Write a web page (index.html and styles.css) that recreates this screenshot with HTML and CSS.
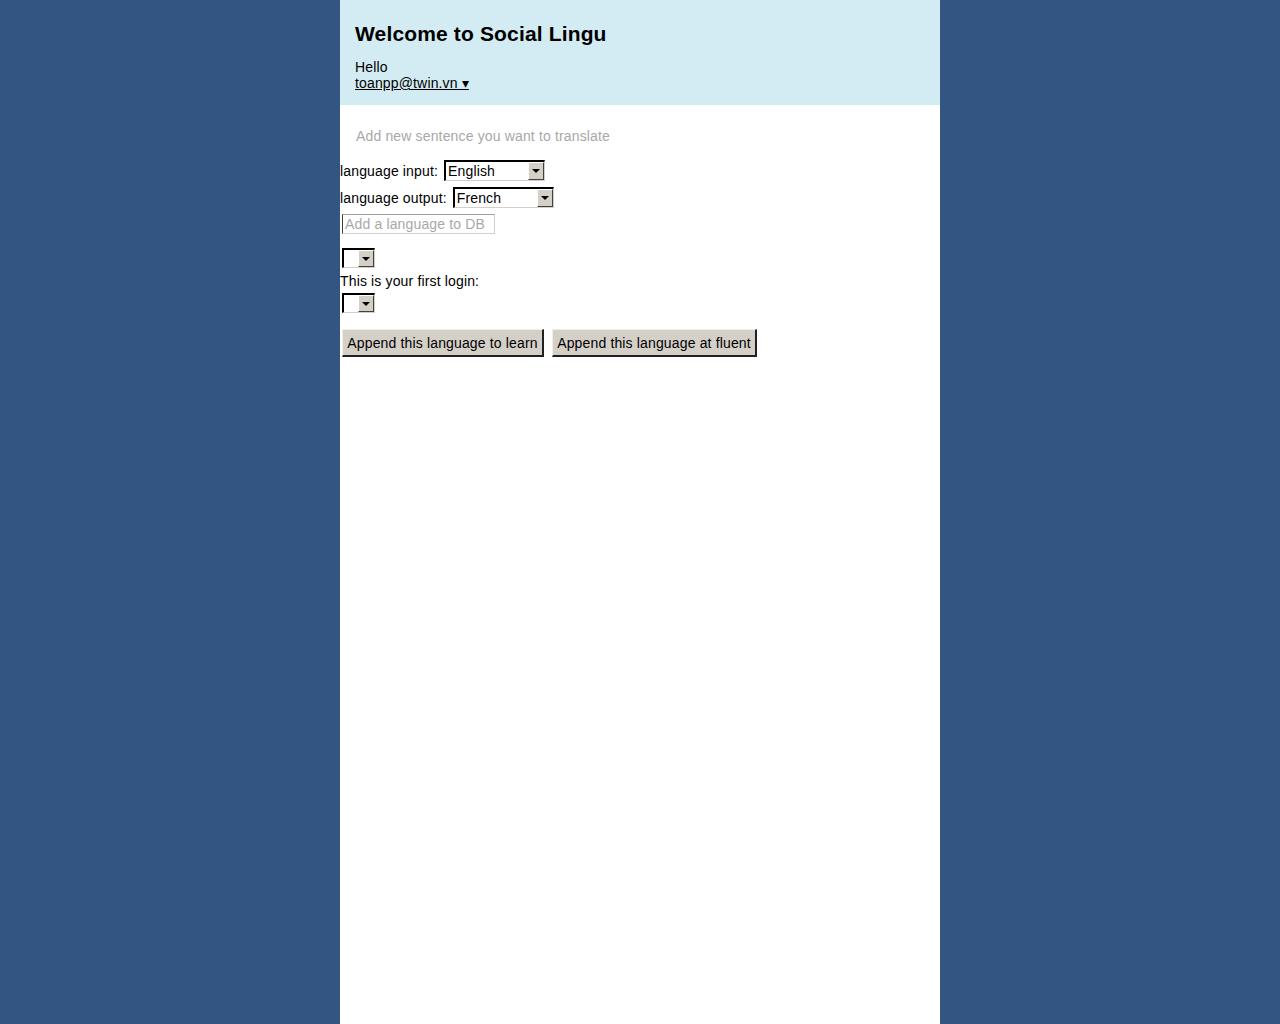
FILE: index.html
```html
<!DOCTYPE html>
<html>
<head>
<meta charset="utf-8">
<title>Social Lingu</title>
<link rel="stylesheet" href="styles.css">
</head>
<body>
<div class="page">
  <header class="header">
    <h1 class="title">Welcome to Social Lingu</h1>
    <div class="hello">Hello</div>
    <a class="user" href="#">toanpp@twin.vn ▾</a>
  </header>
  <main class="content">
    <input class="sentence" type="text" placeholder="Add new sentence you want to translate">
    <div class="row">
      <span class="label">language input:</span>
      <span class="sel wide"><select><option>English</option></select></span>
    </div>
    <div class="row">
      <span class="label">language output:</span>
      <span class="sel wide"><select><option>French</option></select></span>
    </div>
    <div class="row lang-row">
      <input class="lang" type="text" placeholder="Add a language to DB">
    </div>
    <div class="row tiny-row first">
      <span class="sel tiny"><select><option></option></select></span>
    </div>
    <div class="text-line">This is your first login:</div>
    <div class="row tiny-row">
      <span class="sel tiny"><select><option></option></select></span>
    </div>
    <div class="buttons">
      <button class="btn btn-learn">Append this language to learn</button>
      <button class="btn btn-fluent">Append this language at fluent</button>
    </div>
  </main>
</div>
</body>
</html>
```

FILE: styles.css
```css
html, body {
  margin: 0;
  padding: 0;
  height: 100%;
}
body {
  background: #325681;
  font-family: "Liberation Sans", Arial, sans-serif;
  font-size: 14px;
  letter-spacing: 0.15px;
  color: #000;
}
.page {
  width: 600px;
  margin: 0 auto;
  min-height: 100%;
  background: #fff;
}
.header {
  background: #d3ecf3;
  padding: 22px 15px 14px;
}
.title {
  margin: 0 0 13px;
  font-size: 21px;
  line-height: 24px;
  font-weight: bold;
  letter-spacing: 0.15px;
}
.hello {
  line-height: 16px;
}
.user {
  display: inline-block;
  line-height: 16px;
  color: #000;
  text-decoration: underline;
}
.content {
  padding-top: 21px;
}
.sentence {
  display: block;
  margin: 0 0 15px 14px;
  width: 400px;
  height: 19px;
  border: none;
  padding: 0 2px;
  font-family: inherit;
  font-size: 14px;
  letter-spacing: 0.15px;
  background: transparent;
  outline: none;
}
.sentence::placeholder {
  color: #a8a8a8;
}
.row {
  display: flex;
  align-items: center;
  height: 21px;
  margin-bottom: 6px;
}
.lang-row {
  align-items: flex-start;
  margin-bottom: 13px;
}
.tiny-row {
  height: 20px;
  margin-bottom: 5px;
}
.label {
  margin-right: 6px;
}
.sel {
  position: relative;
  display: inline-block;
  height: 21px;
  box-sizing: border-box;
  border-style: solid;
  border-width: 2px 1px 1px 2px;
  border-color: #000 #d4d0c8 #d4d0c8 #000;
  background: #fff;
}
.sel.wide {
  width: 101px;
}
.sel.tiny {
  width: 33px;
  height: 20px;
  margin-left: 2px;
}
.sel select {
  -webkit-appearance: none;
  appearance: none;
  border: none;
  background: transparent;
  width: 100%;
  height: 100%;
  padding: 0 0 0 2px;
  margin: 0;
  font-family: inherit;
  font-size: 14px;
  letter-spacing: 0.15px;
  color: #000;
  outline: none;
}
.sel::after {
  content: "";
  position: absolute;
  top: 0;
  right: 0;
  bottom: 0;
  width: 16px;
  box-sizing: border-box;
  background: #d4d0c8;
  border-style: solid;
  border-width: 1px;
  border-color: #fff #404040 #404040 #fff;
  pointer-events: none;
}
.sel::before {
  content: "";
  position: absolute;
  right: 4px;
  top: 50%;
  margin-top: -2px;
  width: 0;
  height: 0;
  border-left: 4px solid transparent;
  border-right: 4px solid transparent;
  border-top: 4px solid #000;
  z-index: 1;
  pointer-events: none;
}
.lang {
  margin-left: 2px;
  width: 153px;
  height: 20px;
  box-sizing: border-box;
  border-style: solid;
  border-width: 1px;
  border-color: #a0a0a0 #d0d0d0 #d0d0d0 #404040;
  padding: 0 2px;
  font-family: inherit;
  font-size: 14px;
  letter-spacing: 0.15px;
  outline: none;
}
.lang::placeholder {
  color: #a8a8a8;
}
.text-line {
  line-height: 16px;
  height: 16px;
  margin-bottom: 4px;
}
.buttons {
  display: flex;
  gap: 8px;
  padding-left: 2px;
  margin-top: 16px;
}
.btn {
  height: 28px;
  box-sizing: border-box;
  padding: 0;
  background: #d4d0c8;
  border-style: solid;
  border-width: 1px 2px 2px 1px;
  border-color: #f0eee8 #202020 #202020 #f0eee8;
  font-family: inherit;
  font-size: 14px;
  letter-spacing: 0.15px;
  color: #000;
  margin: 0;
  white-space: nowrap;
}
.btn-learn {
  width: 202px;
}
.btn-fluent {
  width: 205px;
}
```
